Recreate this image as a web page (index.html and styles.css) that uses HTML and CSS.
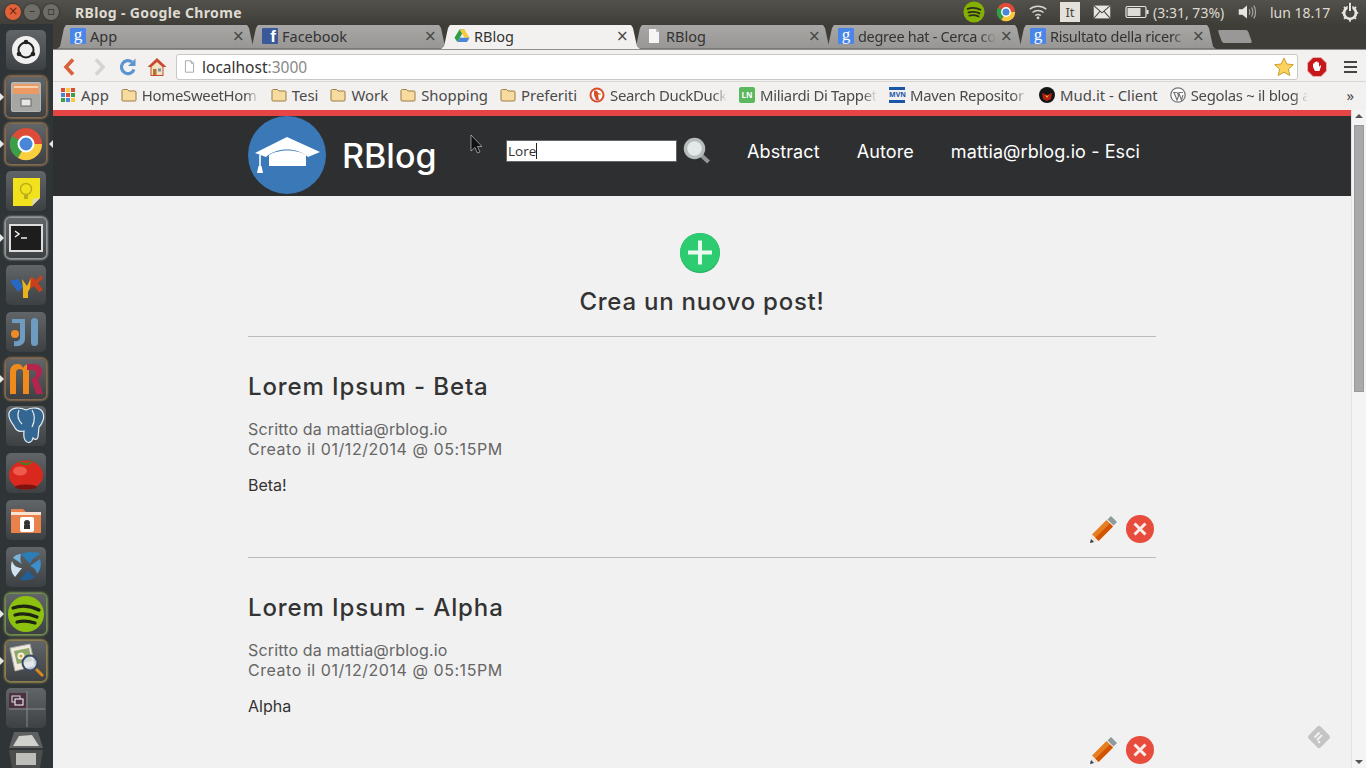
FILE: index.html
```html
<!DOCTYPE html>
<html lang="en">
<head>
    <meta charset="UTF-8">
    <title>RBlog - Google Chrome</title>
    <link rel="stylesheet" href="styles.css">
</head>
<body>
    <!-- ubuntu top panel -->
    <div class="panel">
        <div class="win-buttons">
            <span class="win-btn close">×</span>
            <span class="win-btn">–</span>
            <span class="win-btn">▫</span>
        </div>
        <div class="win-title">RBlog - Google Chrome</div>
        <div class="tray">
            <svg class="tray-icon" viewBox="0 0 24 24"><circle cx="12" cy="12" r="11.500" fill="#84b000"/><path d="M5 8.500c5-1.500 10-1 14 1M6 12.500c4-1 9-.7 12 1M7 16c3-.8 7-.5 10 .8" fill="none" stroke="#2c2c20" stroke-width="2" stroke-linecap="round"/></svg>
            <svg class="tray-icon" viewBox="0 0 24 24"><circle cx="12" cy="12" r="10" fill="#dd4b39"/><path d="M12 12L3.300 7A10 10 0 0 0 7 20.700z" fill="#2f9e44"/><path d="M12 12L7 20.700A10 10 0 0 0 22 12z" fill="#f7c93e"/><circle cx="12" cy="12" r="4.600" fill="#4a86d8" stroke="#fff" stroke-width="1.500"/></svg>
            <svg class="tray-icon" viewBox="0 0 24 24"><path d="M3 9c5-4.500 13-4.500 18 0M6 12.500c3.500-3 8.500-3 12 0M9 15.800c2-1.500 4-1.500 6 0" fill="none" stroke="#d8d6d0" stroke-width="1.600"/><circle cx="12" cy="18.500" r="1.500" fill="#d8d6d0"/></svg>
            <span class="lang-box">It</span>
            <svg class="tray-icon" viewBox="0 0 24 24"><rect x="3" y="5" width="18" height="14" fill="#e8e6e0"/><path d="M3 5l9 8 9-8M3 19l7-8M21 19l-7-8" fill="none" stroke="#4a4843" stroke-width="1.100"/></svg>
            <svg class="battery" viewBox="0 0 24 14"><rect x="1" y="1.500" width="20" height="11" rx="1.500" fill="none" stroke="#e8e6e0" stroke-width="1.200"/><rect x="2.500" y="3" width="13" height="8" fill="#dedcd6"/><rect x="21.500" y="5" width="2" height="4" fill="#e8e6e0"/></svg>
            <span class="tray-text battery-text">(3:31, 73%)</span>
            <svg class="tray-icon volume" viewBox="0 0 24 24"><path d="M3 9h4l5-4v14l-5-4H3z" fill="#e8e6e0"/><path d="M14.500 9c1 2 1 4 0 6M17 7c1.700 3 1.700 7 0 10M19.500 5c2.400 4 2.400 10 0 14" fill="none" stroke="#a8a69f" stroke-width="1.300"/></svg>
            <span class="tray-text clock">lun 18.17</span>
            <svg class="tray-icon gear" viewBox="0 0 24 24"><circle cx="12" cy="13" r="6.500" fill="none" stroke="#e8e6e0" stroke-width="3"/><path d="M12 3v9" stroke="#3f3e39" stroke-width="5"/><path d="M12 2v9" stroke="#e8e6e0" stroke-width="2.200"/><path d="M12 3.500v3M12 19.500v3M3 13h3M18 13h3M5.500 6.500l2 2M16.500 17.500l2 2M5.500 19.500l2-2M16.500 8.500l2-2" stroke="#e8e6e0" stroke-width="2"/></svg>
        </div>
    </div>

    <div class="desktop">
        <!-- launcher -->
        <aside class="launcher">
            <div class="tile"><svg viewBox="0 0 38 38"><circle cx="19" cy="19" r="14" fill="#f0f0f0"/><circle cx="19" cy="19" r="7.500" fill="none" stroke="#222" stroke-width="2"/><circle cx="19" cy="11" r="2.300" fill="#222"/><circle cx="12" cy="23" r="2.300" fill="#222"/><circle cx="26" cy="23" r="2.300" fill="#222"/></svg></div>
            <div class="tile running glow-tan"><svg viewBox="0 0 38 38"><rect x="4" y="4" width="30" height="30" rx="2" fill="#b5b5b3"/><rect x="6" y="6" width="26" height="10" fill="#eb9a64"/><rect x="7" y="8" width="24" height="2" fill="#f7d3b0"/><rect x="5" y="16" width="28" height="17" fill="#a6a6a3"/><rect x="14" y="21" width="10" height="7" fill="#e6e6e6" stroke="#666"/></svg></div>
            <div class="tile running both glow-tan"><svg viewBox="0 0 38 38"><circle cx="19" cy="19" r="16" fill="#dd4b39"/><path d="M19 19L5.100 11A16 16 0 0 0 11 32.900z" fill="#3aa047"/><path d="M19 19L11 32.900A16 16 0 0 0 35 19z" fill="#f9cf3f"/><circle cx="19" cy="19" r="7.500" fill="#4a86d8" stroke="#fff" stroke-width="2"/></svg></div>
            <div class="tile"><svg viewBox="0 0 38 38"><path d="M6 6h27v20l-8 8H6z" fill="#f2e21e"/><path d="M25 34l1-7 7-1z" fill="#d9d9c0"/><circle cx="19" cy="17" r="5.500" fill="none" stroke="#b9ad18" stroke-width="1.400"/><path d="M17 23h4v4h-4z" fill="#b9ad18"/></svg></div>
            <div class="tile running glow-grey"><svg viewBox="0 0 38 38"><rect x="2" y="5" width="34" height="28" fill="#dcdcdc"/><rect x="4" y="7" width="30" height="24" fill="#1d1d1d"/><path d="M8 12l4 3-4 3" fill="none" stroke="#eee" stroke-width="1.500"/><path d="M14 19h6" stroke="#eee" stroke-width="1.500"/></svg></div>
            <div class="tile"><svg viewBox="0 0 38 38"><path d="M3 15l8-2 5 8-5 5z" fill="#2668c6"/><path d="M15 13l5 7 4-8 3 3-6 11v6h-5v-9z" fill="#e9b320"/><path d="M24 10l5 4 5-5 2 3-5 5 5 7-4 2-5-6-4 3z" fill="#c8401c"/></svg></div>
            <div class="tile"><svg viewBox="0 0 38 38"><path d="M5 6h13v20c0 5-5 8-11 7v-5c3 .8 6-.5 6-3V10H5z" fill="#6e9cc0"/><circle cx="8" cy="21" r="4" fill="#ef8a26"/><rect x="24" y="5" width="7" height="28" rx="3.500" fill="#6e9cc0"/></svg></div>
            <div class="tile running glow-tan"><svg viewBox="0 0 38 38"><path d="M3 34V12c0-5 3-8 7-8s5 2 6 4c1-2 3-4 6-4v30h-6V12c0-2-1-3-3-3s-4 1-4 3v22z" fill="#f08a1d"/><path d="M20 4h7c6 0 9 4 8 9-.5 3-2 5-4 6l5 15h-7l-5-16h2c2 0 3-2 3-4s-1-4-4-4h-5z" fill="#b3254d"/></svg></div>
            <div class="tile"><svg viewBox="0 0 38 38"><path d="M2 6c2-6 11-6 17-3 6-3 15-3 17 3 2 5-1 11-4 14l-1 10c-.5 3-3 3-5 1-1 5-6 6-8 2-2-3-1-7-1-9-4 1-8 0-10-5C5 16 1 12 2 6z" fill="#336791" stroke="#e6ecf0" stroke-width="1.200"/><path d="M12 3c-2 5-1 10 3 14M25 3c3 5 3 11 0 17" fill="none" stroke="#e6ecf0" stroke-width="1.200"/></svg></div>
            <div class="tile"><svg viewBox="0 0 38 38"><ellipse cx="19" cy="21" rx="17" ry="14.500" fill="#d9281e"/><ellipse cx="13" cy="17" rx="7" ry="4.500" fill="#ee5a4c"/><ellipse cx="19" cy="33" rx="11" ry="2.500" fill="#7d120e"/><path d="M11 7l8 2 8-2-5 4h-6z" fill="#4e7a28"/></svg></div>
            <div class="tile"><svg viewBox="0 0 38 38"><path d="M4 8h12l3 3h15v21H4z" fill="#e9824a"/><rect x="4" y="11" width="30" height="3" fill="#f6e3d4"/><rect x="13" y="16" width="14" height="15" rx="2" fill="#fff"/><circle cx="20" cy="22" r="3" fill="#333"/><rect x="17" y="24" width="6" height="4" fill="#333"/></svg></div>
            <div class="tile"><svg viewBox="0 0 38 38"><path d="M14 6c8-3 16-2 20 0-5 2-10 6-11 10z" fill="#2c7cb8"/><path d="M33 11c2 6 0 12-3 15-1-5-4-7-7-8z" fill="#3c8fca"/><path d="M28 29c-5 4-12 4-16 2 4-2 7-5 8-9z" fill="#215f96"/><path d="M8 29C4 25 3 18 5 13c2 5 5 7 10 7z" fill="#cfe4f2"/><path d="M6 10c2-3 5-4 8-4-1 4-1 7 1 10z" fill="#79b4dc"/></svg></div>
            <div class="tile running glow-green"><svg viewBox="0 0 38 38"><circle cx="19" cy="19" r="18" fill="#8cc20f"/><path d="M6 13c9-3 18-2 26 2M8 20c7-2 15-1 22 2M10 27c6-1.500 12-1 18 1" fill="none" stroke="#1e2412" stroke-width="3.200" stroke-linecap="round"/></svg></div>
            <div class="tile running glow-yellow"><svg viewBox="0 0 38 38"><path d="M3 6l20-4 5 22-20 5z" fill="#efeadb" stroke="#aaa"/><path d="M7 9l15-3 3 13-15 3z" fill="#8ea86c"/><circle cx="14" cy="14" r="3.500" fill="#f4f0e0"/><circle cx="14" cy="14" r="1.500" fill="#d9a424"/><circle cx="23" cy="21" r="7.500" fill="#dfe8f2" fill-opacity=".75" stroke="#3a4a66" stroke-width="2"/><path d="M29 27l7 7" stroke="#d88a1d" stroke-width="3"/></svg></div>
            <div class="tile switcher"><svg viewBox="0 0 38 38"><path d="M20 2v36M2 20h36" stroke="#8a8a88" stroke-width="1"/><rect x="2" y="4" width="17" height="15" fill="#4a3040"/><rect x="5" y="7" width="8" height="6" fill="none" stroke="#ddd" stroke-width="1"/><rect x="8" y="10" width="8" height="6" fill="#4a3040" stroke="#fff" stroke-width="1"/></svg></div>
            <div class="tile trash"><svg viewBox="0 0 38 38"><path d="M2 18L7 2h24l5 16z" fill="#5d5f60"/><path d="M6 16l6-10 13-1 7 11z" fill="#d0d0cc"/><path d="M2 20h34l-3 18H5z" fill="#4c4e4e"/><path d="M9 23h20v12H9z" fill="#bdbdb9"/></svg></div>
        </aside>

        <div class="browser">
            <div class="tabstrip">
                <div class="tab"><span class="fav fav-g">g</span><span class="tab-label">App</span><span class="tab-x">×</span></div>
                <div class="tab"><span class="fav fav-f">f</span><span class="tab-label">Facebook</span><span class="tab-x">×</span></div>
                <div class="tab active">
                    <svg class="fav" viewBox="0 0 16 16"><path d="M5.500 1.500h5L5.800 9.800 3.300 14 .5 9.700z" fill="#2f9e44"/><path d="M5.500 1.500h5l5 8.200h-5z" fill="#f7c93e"/><path d="M3.300 14l2.500-4.300h9.700L13 14z" fill="#4a86d8"/></svg>
                    <span class="tab-label">RBlog</span><span class="tab-x">×</span>
                </div>
                <div class="tab">
                    <svg class="fav" viewBox="0 0 16 16"><path d="M3 1h7l3 3v11H3z" fill="#f5f5f5"/><path d="M10 1v3h3" fill="#bbb"/></svg>
                    <span class="tab-label">RBlog</span><span class="tab-x">×</span>
                </div>
                <div class="tab"><span class="fav fav-g">g</span><span class="tab-label fade">degree hat - Cerca co</span><span class="tab-x">×</span></div>
                <div class="tab"><span class="fav fav-g">g</span><span class="tab-label fade">Risultato della ricerc</span><span class="tab-x">×</span></div>
                <div class="new-tab"></div>
            </div>

            <div class="toolbar">
                <svg class="tool" viewBox="0 0 20 20"><path d="M13 2.500L6 10l7 7.500" fill="none" stroke="#d9603a" stroke-width="3.600"/></svg>
                <svg class="tool" viewBox="0 0 20 20"><path d="M7 2.500L14 10l-7 7.500" fill="none" stroke="#d5d4d0" stroke-width="3.600"/></svg>
                <svg class="tool" viewBox="0 0 20 20"><path d="M16 12.500A6.500 6.500 0 1 1 14 5" fill="none" stroke="#5b94cf" stroke-width="3.200"/><path d="M17.500 1.500v7.500H10z" fill="#5b94cf"/></svg>
                <svg class="tool" viewBox="0 0 20 20"><path d="M10 1L0.500 10h3v9h13v-9h3z" fill="#c9492e"/><path d="M4.500 10L10 5l5.500 5v8h-11z" fill="#f1e2c4"/><rect x="6" y="12" width="3.500" height="6" fill="#b3762c"/><rect x="11" y="11.500" width="3" height="3" fill="#7a93a8"/></svg>
                <div class="omnibox">
                    <svg class="page-icon" viewBox="0 0 16 16"><path d="M3 1h7l3 3v11H3zM10 1v3h3" fill="#fff" stroke="#999"/></svg>
                    <span class="url-host">localhost</span><span class="url-port">:3000</span>
                    <svg class="star" viewBox="0 0 20 20"><path d="M10 1l2.800 6 6.500.7-4.900 4.300 1.400 6.500L10 15.200 4.200 18.500l1.400-6.500L.7 7.700 7.200 7z" fill="#fbd35c" stroke="#c9a030"/></svg>
                </div>
                <svg class="adblock" viewBox="0 0 20 20"><path d="M6 .5h8L19.500 6v8L14 19.500H6L.5 14V6z" fill="#c6171b" stroke="#e8b0b0"/><path d="M6 10V6.500h1.500V9V5h1.500v4V4.500h1.500V9V5.500H12V10l1-1.500h1.200L12.500 14H8z" fill="#fff"/></svg>
                <div class="menu-btn"><span></span><span></span><span></span></div>
            </div>

            <div class="bookmarks">
                <div class="bm apps">
                    <svg class="bm-icon" viewBox="0 0 14 14"><path d="M0 0h4v4H0z" fill="#dd4b39"/><path d="M5 0h4v4H5z" fill="#f7c93e"/><path d="M10 0h4v4h-4z" fill="#dd4b39"/><path d="M0 5h4v4H0z" fill="#4a86d8"/><path d="M5 5h4v4H5z" fill="#dd4b39"/><path d="M10 5h4v4h-4z" fill="#3aa047"/><path d="M0 10h4v4H0z" fill="#3aa047"/><path d="M5 10h4v4H5z" fill="#4a86d8"/><path d="M10 10h4v4h-4z" fill="#f7c93e"/></svg>
                    <span>App</span>
                </div>
                <div class="bm"><svg class="bm-icon folder" viewBox="0 0 16 14"><path d="M1 3c0-1 .5-1.500 1.500-1.500h4L8 3h6c.7 0 1 .4 1 1v8c0 .7-.4 1-1 1H2c-.7 0-1-.4-1-1z" fill="#f8dc9f" stroke="#9c7d45"/></svg><span class="bm-label fade">HomeSweetHom</span></div>
                <div class="bm"><svg class="bm-icon folder" viewBox="0 0 16 14"><path d="M1 3c0-1 .5-1.500 1.500-1.500h4L8 3h6c.7 0 1 .4 1 1v8c0 .7-.4 1-1 1H2c-.7 0-1-.4-1-1z" fill="#f8dc9f" stroke="#9c7d45"/></svg><span>Tesi</span></div>
                <div class="bm"><svg class="bm-icon folder" viewBox="0 0 16 14"><path d="M1 3c0-1 .5-1.500 1.500-1.500h4L8 3h6c.7 0 1 .4 1 1v8c0 .7-.4 1-1 1H2c-.7 0-1-.4-1-1z" fill="#f8dc9f" stroke="#9c7d45"/></svg><span>Work</span></div>
                <div class="bm"><svg class="bm-icon folder" viewBox="0 0 16 14"><path d="M1 3c0-1 .5-1.500 1.500-1.500h4L8 3h6c.7 0 1 .4 1 1v8c0 .7-.4 1-1 1H2c-.7 0-1-.4-1-1z" fill="#f8dc9f" stroke="#9c7d45"/></svg><span>Shopping</span></div>
                <div class="bm"><svg class="bm-icon folder" viewBox="0 0 16 14"><path d="M1 3c0-1 .5-1.500 1.500-1.500h4L8 3h6c.7 0 1 .4 1 1v8c0 .7-.4 1-1 1H2c-.7 0-1-.4-1-1z" fill="#f8dc9f" stroke="#9c7d45"/></svg><span>Preferiti</span></div>
                <div class="bm"><svg class="bm-icon" viewBox="0 0 16 16"><circle cx="8" cy="8" r="7.500" fill="#d5502f"/><circle cx="8" cy="8" r="5.500" fill="#fff"/><path d="M5 4c2-1 4 0 4 2l3 1-3 1 1 5H7L5 8z" fill="#d5502f"/><path d="M9 7l3-.5-1 2z" fill="#f0c420"/></svg><span class="bm-label fade">Search DuckDuck</span></div>
                <div class="bm"><span class="bm-icon fav-ln">LN</span><span class="bm-label fade">Miliardi Di Tappet</span></div>
                <div class="bm"><span class="bm-icon fav-mvn">MVN</span><span class="bm-label fade">Maven Repositor</span></div>
                <div class="bm"><svg class="bm-icon" viewBox="0 0 16 16"><circle cx="8" cy="8" r="8" fill="#141414"/><path d="M3 6l5 2 5-2-1 6-4 2-4-2z" fill="#b3201a"/><path d="M6 8l2 1 2-1-2 3z" fill="#e6b422"/></svg><span>Mud.it - Client</span></div>
                <div class="bm"><svg class="bm-icon" viewBox="0 0 16 16"><circle cx="8" cy="8" r="7.200" fill="#fff" stroke="#777" stroke-width="1.300"/><path d="M3 5.500h4M9 5.500h4M4 5.500l3 7.500 1.500-4-1-3.500M8.500 5.500l3 7.500 1.500-5" fill="none" stroke="#777" stroke-width="1.200"/></svg><span class="bm-label fade">Segolas ~ il blog a</span></div>
                <span class="bm-more">»</span>
            </div>

            <div class="viewport">
                <div class="page">
                    <header class="site-header">
                        <div class="site-inner">
                            <div class="logo">
                                <svg viewBox="0 0 78 78"><path d="M39 21l33 15-12 5C50 31 28 31 18 41L7 37z" fill="#fff"/><path d="M21 39c9-6 28-6 37 0v11H21z" fill="#fff"/><path d="M12 39v18" stroke="#fff" stroke-width="1.600"/><path d="M10.500 50h3l1.500 7H9z" fill="#fff"/></svg>
                            </div>
                            <a class="brand">RBlog</a>
                            <form class="search">
                                <div class="search-input"><span>Lore</span><i class="caret"></i></div>
                                <svg class="search-icon" viewBox="0 0 28 28"><path d="M17 17l8.500 8" stroke="#8f9a98" stroke-width="4"/><circle cx="11.500" cy="11.500" r="9" fill="#e3e8e8" stroke="#b6bcba" stroke-width="3.500"/></svg>
                            </form>
                            <nav class="nav">
                                <a>Abstract</a>
                                <a>Autore</a>
                                <a>mattia@rblog.io - Esci</a>
                            </nav>
                        </div>
                    </header>

                    <main class="content">
                        <section class="new-post">
                            <svg class="add-icon" viewBox="0 0 40 40"><circle cx="20" cy="20" r="20" fill="#28b263"/><path d="M20 0a20 20 0 0 1 19.800 17.500A20 20 0 0 1 .2 22.500 20 20 0 0 1 20 0z" fill="#2ecc71"/><path d="M20 7.500v24M8 19.500h24" stroke="#e9f9ef" stroke-width="4"/></svg>
                            <h2>Crea un nuovo post!</h2>
                        </section>

                        <article class="post">
                            <h1>Lorem Ipsum - Beta</h1>
                            <p class="meta">Scritto da mattia@rblog.io<br><span class="date">Creato il 01/12/2014 @ 05:15PM</span></p>
                            <p class="body-text">Beta!</p>
                            <div class="actions">
                                <svg viewBox="0 0 28 28"><path d="M21 1l6 6-3.500 3.500-6-6z" fill="#8e9a9c"/><path d="M16.500 5l6.500 6.500L8.500 26 2 19.500z" fill="#e67e22"/><path d="M20 8.500L5 23l3.500 3L23 11.500z" fill="#d35400"/><path d="M2 19.500L0 28l8.500-2z" fill="#f2e6d8"/><path d="M1 24L0 28l4-1z" fill="#2c3e50"/></svg>
                                <svg viewBox="0 0 28 28"><circle cx="14" cy="14" r="14" fill="#e74c3c"/><path d="M8.500 8.500l11 11M19.500 8.500l-11 11" stroke="#f9ece9" stroke-width="3"/></svg>
                            </div>
                        </article>

                        <article class="post">
                            <h1>Lorem Ipsum - Alpha</h1>
                            <p class="meta">Scritto da mattia@rblog.io<br><span class="date">Creato il 01/12/2014 @ 05:15PM</span></p>
                            <p class="body-text">Alpha</p>
                            <div class="actions">
                                <svg viewBox="0 0 28 28"><path d="M21 1l6 6-3.500 3.500-6-6z" fill="#8e9a9c"/><path d="M16.500 5l6.500 6.500L8.500 26 2 19.500z" fill="#e67e22"/><path d="M20 8.500L5 23l3.500 3L23 11.500z" fill="#d35400"/><path d="M2 19.500L0 28l8.500-2z" fill="#f2e6d8"/><path d="M1 24L0 28l4-1z" fill="#2c3e50"/></svg>
                                <svg viewBox="0 0 28 28"><circle cx="14" cy="14" r="14" fill="#e74c3c"/><path d="M8.500 8.500l11 11M19.500 8.500l-11 11" stroke="#f9ece9" stroke-width="3"/></svg>
                            </div>
                        </article>
                    </main>
                </div>

                <div class="scrollbar">
                    <i class="arrow-up"></i>
                    <div class="thumb"></div>
                    <i class="arrow-down"></i>
                </div>

                <!-- floating feedly button -->
                <svg class="feedly" viewBox="0 0 26 26"><rect x="4.500" y="4.500" width="17" height="17" rx="2.500" transform="rotate(45 13 13)" fill="#c4c4c4"/><path d="M8.500 13.500l5-5M11 16l5-5" stroke="#f1f1f1" stroke-width="2"/><circle cx="13" cy="18" r="1.300" fill="#f1f1f1"/></svg>
            </div>
        </div>
    </div>

    <svg class="cursor" viewBox="0 0 12 20"><path d="M1 1v16l4-3.500 2.500 5.500 2.500-1-2.500-5.500H12z" fill="#111" stroke="#fff" stroke-width=".5"/></svg>
</body>
</html>
```

FILE: styles.css
```css
* {
    box-sizing: border-box;
}

html, body {
    margin: 0;
    height: 768px;
    overflow: hidden;
}

body {
    font-family: "Noto Sans", sans-serif;
    background: #3c3b37;
    display: flex;
    flex-direction: column;
}

/* top panel */
.panel {
    height: 24px;
    flex: none;
    display: flex;
    align-items: center;
    background: linear-gradient(#53514b, #3f3e39);
    color: #dfdbd2;
}

.win-buttons {
    display: flex;
    gap: 3px;
    padding-left: 5px;
    width: 75px;
}

.win-btn {
    width: 16px;
    height: 16px;
    border-radius: 50%;
    background: #6f6d67;
    box-shadow: 0 0 1px 1px #3a3934;
    color: #35342f;
    font-size: 12px;
    line-height: 15px;
    text-align: center;
    font-family: "DejaVu Sans", sans-serif;
}

.win-btn.close {
    background: #e0613a;
    color: #6b2410;
}

.win-title {
    font-size: 14px;
    font-weight: 700;
    letter-spacing: 0.35px;
}

.tray {
    margin-left: auto;
    display: flex;
    align-items: center;
}

.tray-icon {
    width: 22px;
    height: 22px;
    margin-right: 10px;
}

.lang-box {
    width: 20px;
    height: 20px;
    margin: 0 11px 0 1px;
    background: #e4e1da;
    color: #4a4843;
    font-size: 13px;
    text-align: center;
    line-height: 20px;
}

.battery {
    width: 24px;
    height: 14px;
    margin: 0 4px 0 2px;
}

.tray-text {
    font-size: 14px;
    color: #dfdbd2;
    white-space: nowrap;
}

.battery-text {
    width: 83px;
}

.volume {
    margin-right: 12px;
}

.clock {
    width: 69px;
}

.gear {
    margin-right: 5px;
}

/* launcher */
.desktop {
    flex: 1;
    display: flex;
    min-height: 0;
}

.launcher {
    width: 53px;
    flex: none;
    background: #2f3437;
    padding-top: 6px;
    display: flex;
    flex-direction: column;
    gap: 7px;
    overflow: hidden;
}

.tile {
    position: relative;
    width: 40px;
    height: 40px;
    flex: none;
    margin-left: 6px;
    border-radius: 5px;
    background: linear-gradient(#626568, #3d4144);
    padding: 1px;
}

.tile svg {
    display: block;
    width: 38px;
    height: 38px;
}

.glow-tan {
    box-shadow: 0 0 2px 2px rgba(176, 136, 92, 0.7);
}

.glow-grey {
    box-shadow: 0 0 2px 2px rgba(190, 192, 192, 0.75);
}

.glow-green {
    box-shadow: 0 0 2px 2px rgba(150, 185, 90, 0.7);
}

.glow-yellow {
    box-shadow: 0 0 2px 2px rgba(190, 165, 90, 0.7);
}

.running::before {
    content: "";
    position: absolute;
    left: -6px;
    top: 16px;
    border-left: 4px solid #e8e8e8;
    border-top: 4px solid transparent;
    border-bottom: 4px solid transparent;
}

.both::after {
    content: "";
    position: absolute;
    right: -7px;
    top: 16px;
    border-right: 4px solid #e8e8e8;
    border-top: 4px solid transparent;
    border-bottom: 4px solid transparent;
}

.trash {
    background: none;
    margin-top: -6px;
}

/* browser */
.browser {
    flex: 1;
    display: flex;
    flex-direction: column;
    min-width: 0;
}

.tabstrip {
    height: 25px;
    flex: none;
    display: flex;
    padding: 1px 0 0 4px;
    background: #3e3d38;
}

.tab {
    width: 199px;
    flex: none;
    margin-right: -7px;
    height: 24px;
    display: flex;
    align-items: center;
    padding: 0 12px 2px 13px;
    background: linear-gradient(#a8a7a5, #989795);
    border-bottom: 1px solid #7a7976;
    clip-path: polygon(0 100%, 3px 90%, 7px 12%, 9px 0, calc(100% - 9px) 0, calc(100% - 7px) 12%, calc(100% - 3px) 90%, 100% 100%);
    color: #333;
    font-size: 14.5px;
}

.tab.active {
    position: relative;
    z-index: 2;
    height: 24px;
    background: #f2f1f0;
    border-bottom: none;
}

.fav {
    width: 16px;
    height: 16px;
    flex: none;
    margin-right: 4px;
}

.fav-g, .fav-f {
    display: block;
    text-align: center;
    color: #fff;
    border-radius: 1px;
    font-family: "Liberation Serif", serif;
    font-size: 17px;
    line-height: 14px;
}

.fav-g {
    background: #4a86e8;
}

.fav-f {
    background: #3b5998;
    font-family: "Liberation Sans", sans-serif;
    font-weight: 700;
    line-height: 17px;
    text-align: right;
    padding-right: 2px;
}

.tab-label {
    flex: 1;
    min-width: 0;
    white-space: nowrap;
    overflow: hidden;
}

.fade {
    letter-spacing: -0.3px;
    -webkit-mask-image: linear-gradient(to right, #000 88%, transparent);
    mask-image: linear-gradient(to right, #000 88%, transparent);
}

.tab-x {
    flex: none;
    width: 12px;
    margin-left: 4px;
    text-align: center;
    font-size: 15px;
    line-height: 20px;
    color: #444;
    font-family: "DejaVu Sans", sans-serif;
}

.new-tab {
    width: 30px;
    height: 13px;
    margin: 5px 0 0 11px;
    background: #999896;
    border-radius: 2px;
    transform: skewX(20deg);
}

.toolbar {
    height: 33px;
    flex: none;
    display: flex;
    align-items: center;
    padding: 2px 0 0 7px;
    background: #f2f1f0;
    border-top: 1px solid #8f8e8c;
    border-bottom: 1px solid #d8d7d5;
}

.tool {
    width: 20px;
    height: 20px;
    margin-right: 9px;
}

.omnibox {
    width: 1122px;
    height: 26px;
    display: flex;
    align-items: center;
    padding: 0 3px 0 6px;
    background: #fff;
    border: 1px solid #c9c8c6;
    border-radius: 3px;
    font-size: 15.5px;
}

.page-icon {
    width: 13px;
    height: 15px;
    margin-right: 6px;
}

.url-host {
    color: #333;
}

.url-port {
    color: #888;
}

.star {
    width: 20px;
    height: 20px;
    margin-left: auto;
}

.adblock {
    width: 20px;
    height: 20px;
    margin: 0 0 0 9px;
}

.menu-btn {
    width: 13px;
    margin-left: 17px;
    display: flex;
    flex-direction: column;
    gap: 3px;
}

.menu-btn span {
    display: block;
    height: 2px;
    background: #444;
}

.bookmarks {
    height: 28px;
    flex: none;
    display: flex;
    align-items: center;
    padding: 0 0 2px 8px;
    gap: 12px;
    background: #f2f1f0;
    font-size: 14.9px;
    color: #4a4a4a;
}

.bm {
    display: flex;
    align-items: center;
    white-space: nowrap;
    flex: none;
}

.bm-icon {
    width: 16px;
    height: 16px;
    flex: none;
    margin-right: 5px;
}

.apps .bm-icon {
    width: 14px;
    height: 14px;
    margin-right: 6px;
}

.folder {
    height: 14px;
}

.bm-label {
    width: 117px;
    overflow: hidden;
}

.fav-ln {
    display: block;
    background: #5cb85c;
    border-radius: 2px;
    color: #fff;
    font-size: 8px;
    font-weight: 700;
    line-height: 16px;
    text-align: center;
}

.fav-mvn {
    display: block;
    color: #1a56a8;
    border-top: 3px solid #1a56a8;
    border-bottom: 3px solid #1a56a8;
    font-size: 7px;
    font-weight: 700;
    line-height: 10px;
    text-align: center;
}

.bm-more {
    margin-left: auto;
    padding-right: 12px;
}

/* the page in the tab */
.viewport {
    flex: 1;
    min-height: 0;
    position: relative;
    display: flex;
    background: #f1f1f1;
}

.page {
    flex: 1;
    min-width: 0;
    overflow: hidden;
}

.site-header {
    height: 86px;
    background: #2e2f31;
    border-top: 6px solid #e64545;
}

.site-inner, .content {
    width: 908px;
    margin: 0 auto;
}

.site-inner {
    display: flex;
    align-items: center;
    height: 80px;
    color: #fff;
}

.logo {
    width: 78px;
    height: 78px;
    flex: none;
    border-radius: 50%;
    background: #3b78b8;
    margin-top: -2px;
}

.logo svg {
    display: block;
}

.brand {
    margin: -2px 0 0 16px;
    width: 164px;
    font-family: Inter, sans-serif;
    font-size: 34px;
    font-weight: 500;
}

.search {
    display: flex;
    align-items: center;
    margin-top: -10px;
}

.search-input {
    width: 171px;
    height: 22px;
    display: flex;
    align-items: center;
    padding-left: 1px;
    background: #fff;
    border: 1px solid #666;
    color: #333;
    font-family: "Open Sans", sans-serif;
    font-size: 13.5px;
}

.caret {
    width: 1px;
    height: 16px;
    background: #222;
}

.search-icon {
    width: 28px;
    height: 28px;
    margin-left: 6px;
}

.nav {
    display: flex;
    gap: 37px;
    margin: -10px 0 0 36px;
    font-family: Inter, sans-serif;
    font-size: 18px;
    letter-spacing: 0.1px;
}

.new-post {
    padding: 37px 0 19px;
    text-align: center;
    border-bottom: 1px solid #bbb;
}

.add-icon {
    display: block;
    width: 40px;
    height: 40px;
    margin: 0 auto;
    transform: translateX(-2px);
}

.new-post h2 {
    margin: 14px 0 0;
    font-family: Inter, sans-serif;
    font-size: 24px;
    line-height: 30px;
    font-weight: 500;
    letter-spacing: 0.75px;
    color: #333;
}

.post {
    padding: 34px 0 14px;
    border-bottom: 1px solid #bbb;
}

.post h1 {
    margin: 1px 0 -1px;
    font-family: Inter, sans-serif;
    font-size: 24px;
    line-height: 30px;
    font-weight: 500;
    letter-spacing: 0.9px;
    color: #333;
}

.meta {
    margin: 18px 0 0;
    font-family: Inter, sans-serif;
    font-size: 16px;
    line-height: 20px;
    letter-spacing: 0.15px;
    color: #666;
}

.date {
    letter-spacing: 0.55px;
}

.body-text {
    margin: 16px 0 0;
    font-family: Inter, sans-serif;
    font-size: 16px;
    line-height: 20px;
    color: #333;
}

.actions {
    display: flex;
    justify-content: flex-end;
    gap: 8px;
    margin-top: 20px;
    padding-right: 2px;
}

.actions svg {
    width: 28px;
    height: 28px;
    display: block;
}

/* scrollbar */
.scrollbar {
    width: 15px;
    flex: none;
    padding: 4px 2px;
    background: #f4f4f4;
    border-left: 1px solid #e2e2e2;
    display: flex;
    flex-direction: column;
}

.thumb {
    height: 267px;
    margin-top: 7px;
    background: #a9a9a9;
    border: 1px solid #999;
}

.arrow-up, .arrow-down {
    display: block;
    width: 0;
    margin: 0 auto;
    border-left: 4px solid transparent;
    border-right: 4px solid transparent;
}

.arrow-up {
    border-bottom: 4px solid #555;
}

.arrow-down {
    margin-top: auto;
    border-top: 4px solid #555;
}

.feedly {
    position: absolute;
    left: 1253px;
    top: 614px;
    width: 26px;
    height: 26px;
}

.cursor {
    position: absolute;
    left: 470px;
    top: 134px;
    width: 12px;
    height: 20px;
}
```
